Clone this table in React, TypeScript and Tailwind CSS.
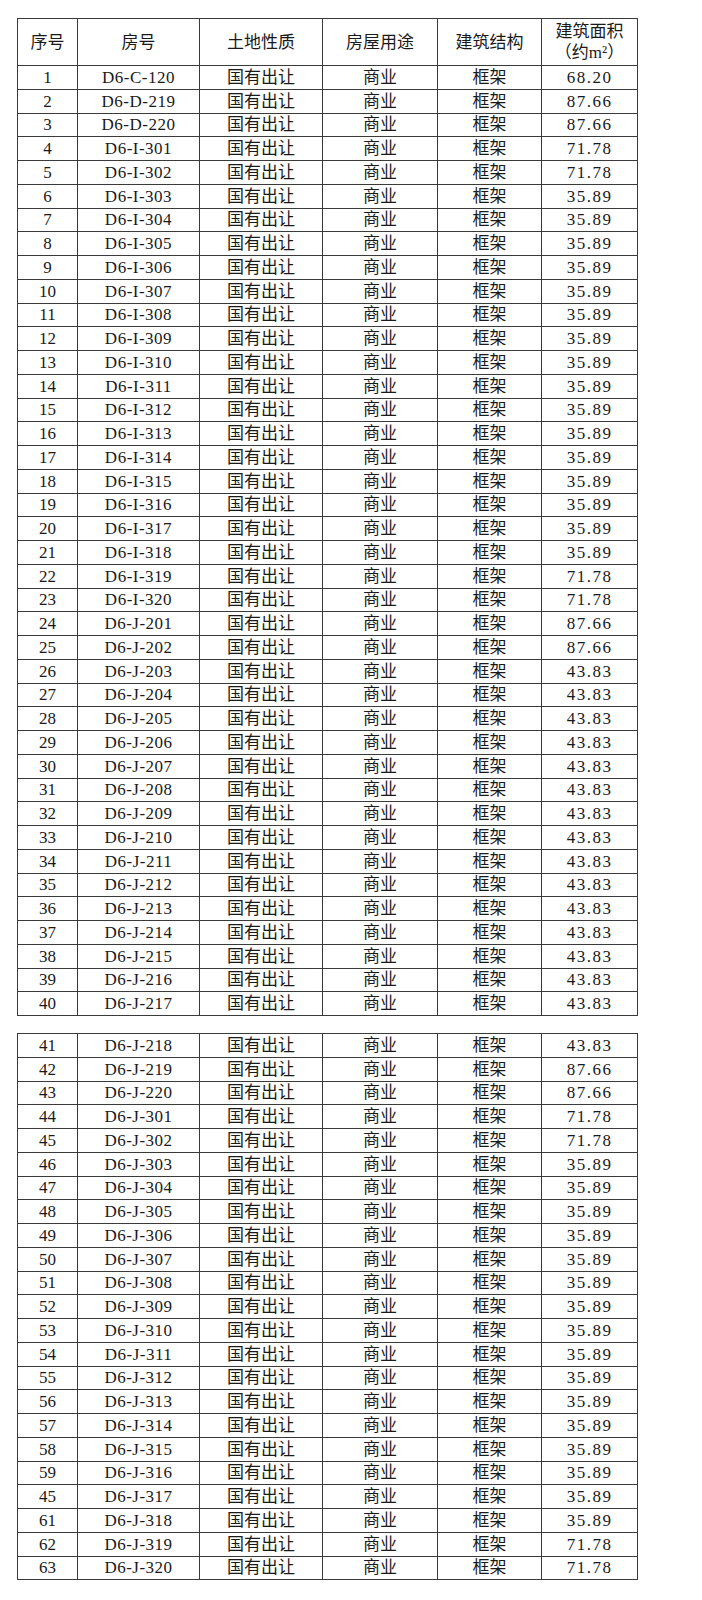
type Row = { no: string; room: string; area: string };

const range = (from: number, to: number) =>
    Array.from({length: to - from + 1}, (_, i) => from + i);

const firstRows: Row[] = [
    {no: "1", room: "D6-C-120", area: "68.20"},
    {no: "2", room: "D6-D-219", area: "87.66"},
    {no: "3", room: "D6-D-220", area: "87.66"},
    {no: "4", room: "D6-I-301", area: "71.78"},
    {no: "5", room: "D6-I-302", area: "71.78"},
    ...range(303, 318).map((n, i) => ({no: String(6 + i), room: `D6-I-${n}`, area: "35.89"})),
    {no: "22", room: "D6-I-319", area: "71.78"},
    {no: "23", room: "D6-I-320", area: "71.78"},
    {no: "24", room: "D6-J-201", area: "87.66"},
    {no: "25", room: "D6-J-202", area: "87.66"},
    ...range(203, 217).map((n, i) => ({no: String(26 + i), room: `D6-J-${n}`, area: "43.83"})),
];

const secondRows: Row[] = [
    {no: "41", room: "D6-J-218", area: "43.83"},
    {no: "42", room: "D6-J-219", area: "87.66"},
    {no: "43", room: "D6-J-220", area: "87.66"},
    {no: "44", room: "D6-J-301", area: "71.78"},
    {no: "45", room: "D6-J-302", area: "71.78"},
    // the source itself numbers row 60 as 45
    ...range(303, 317).map((n, i) => ({no: i === 14 ? "45" : String(46 + i), room: `D6-J-${n}`, area: "35.89"})),
    {no: "61", room: "D6-J-318", area: "35.89"},
    {no: "62", room: "D6-J-319", area: "71.78"},
    {no: "63", room: "D6-J-320", area: "71.78"},
];

function Cols() {
    return (
        <colgroup>
            <col className="w-[60px]"/>
            <col className="w-[122px]"/>
            <col className="w-[123px]"/>
            <col className="w-[115px]"/>
            <col className="w-[104px]"/>
            <col className="w-[96px]"/>
        </colgroup>
    );
}

function Body({rows}: { rows: Row[] }) {
    return (
        <tbody>
        {rows.map((r, i) => (
            <tr key={i} className="h-[23.75px]">
                <td className="border border-[#3a3a3a] p-0 text-center">{r.no}</td>
                <td className="border border-[#3a3a3a] p-0 text-center tracking-[0.5px]">{r.room}</td>
                <td className="border border-[#3a3a3a] p-0 text-center">国有出让</td>
                <td className="border border-[#3a3a3a] p-0 text-center">商业</td>
                <td className="border border-[#3a3a3a] p-0 text-center">框架</td>
                <td className="border border-[#3a3a3a] p-0 text-center tracking-[1.5px]">{r.area}</td>
            </tr>
        ))}
        </tbody>
    );
}

export default function App() {
    return (
        <div
            className="min-h-[1600px] w-[702px] bg-white pl-[17px] pt-[18px] text-[17px] leading-none text-[#1a1a1a]"
            style={{fontFamily: '"Liberation Serif", "Noto Sans CJK SC", serif'}}
        >
            <table className="w-[621px] table-fixed border-collapse">
                <Cols/>
                <thead>
                <tr className="h-[47px]">
                    <th className="border border-[#3a3a3a] p-0 text-center font-normal">序号</th>
                    <th className="border border-[#3a3a3a] p-0 text-center font-normal">房号</th>
                    <th className="border border-[#3a3a3a] p-0 text-center font-normal">土地性质</th>
                    <th className="border border-[#3a3a3a] p-0 text-center font-normal">房屋用途</th>
                    <th className="border border-[#3a3a3a] p-0 text-center font-normal">建筑结构</th>
                    <th className="border border-[#3a3a3a] p-0 text-center font-normal leading-[21px]">
                        <div>建筑面积</div>
                        <div>（约m²）</div>
                    </th>
                </tr>
                </thead>
                <Body rows={firstRows}/>
            </table>

            <table className="mt-[17px] w-[621px] table-fixed border-collapse">
                <Cols/>
                <Body rows={secondRows}/>
            </table>
        </div>
    );
}
